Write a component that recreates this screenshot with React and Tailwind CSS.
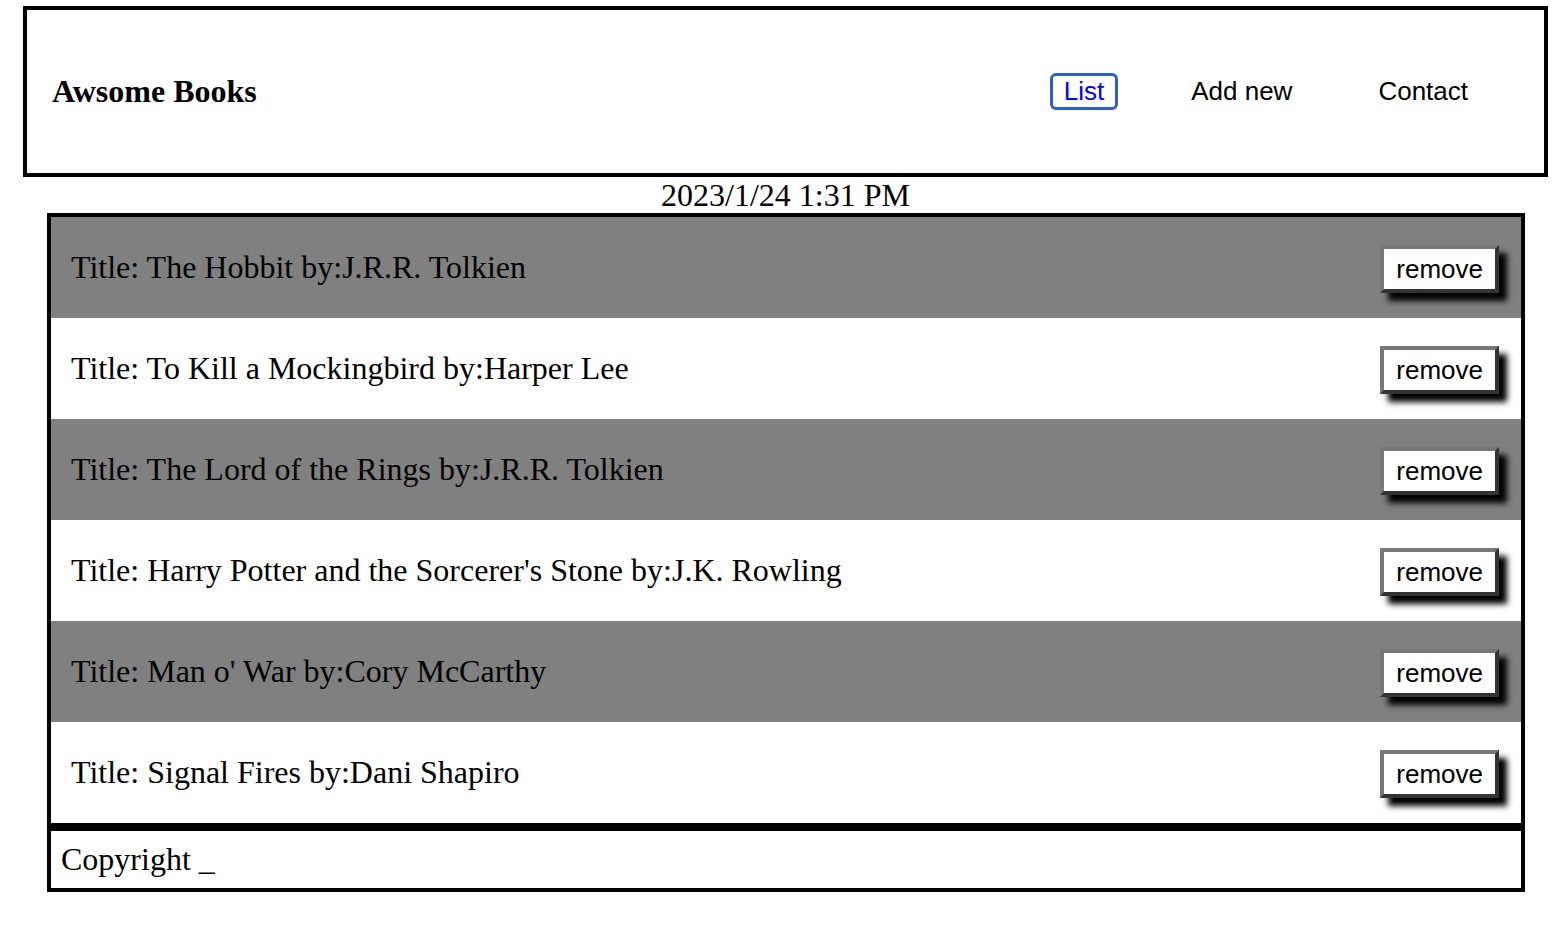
import React from "react";

const books = [
  "Title: The Hobbit by:J.R.R. Tolkien",
  "Title: To Kill a Mockingbird by:Harper Lee",
  "Title: The Lord of the Rings by:J.R.R. Tolkien",
  "Title: Harry Potter and the Sorcerer's Stone by:J.K. Rowling",
  "Title: Man o' War by:Cory McCarthy",
  "Title: Signal Fires by:Dani Shapiro",
];

export default function App() {
  return (
    <div className="min-h-[946px] bg-white text-black font-['Liberation_Serif',serif] pt-[6px]">
      <header className="ml-[23px] mr-[20px] h-[171px] border-[4px] border-black flex items-center justify-between pl-[25px] pr-[63px]">
        <h1 className="text-[32px] font-bold leading-[37px]">Awsome Books</h1>
        <nav className="flex items-center gap-[60px] font-['Liberation_Sans',Arial,sans-serif] text-[26px] leading-[31px]">
          <a className="border-[3px] border-[#2b5fd0] rounded-[6px] px-[11px] text-[#0000ee]">List</a>
          <a className="px-[13px]">Add new</a>
          <a className="px-[13px]">Contact</a>
        </nav>
      </header>
      <div className="ml-[23px] mr-[20px] text-center text-[32px] leading-[36px]">2023/1/24 1:31 PM</div>
      <ul className="ml-[47px] mr-[43px] border-[4px] border-black">
        {books.map((b, i) => (
          <li
            key={i}
            className={
              "h-[101px] flex items-center justify-between pl-[20px] pr-[22px] " +
              (i % 2 === 0 ? "bg-[#808080]" : "bg-white")
            }
          >
            <span className="text-[32px] leading-[37px]">{b}</span>
            <button className="bg-white font-['Liberation_Sans',Arial,sans-serif] text-[26px] leading-[30px] px-[12px] py-[5px] border-[4px] border-t-[#777777] border-l-[#777777] border-b-[#333333] border-r-[#333333] shadow-[8px_8px_6px_#000] mt-[2px]">
              remove
            </button>
          </li>
        ))}
      </ul>
      <footer className="ml-[47px] mr-[43px] border-[4px] border-black h-[65px] flex items-center px-[10px] text-[32px] leading-[37px]">
        Copyright _
      </footer>
    </div>
  );
}
